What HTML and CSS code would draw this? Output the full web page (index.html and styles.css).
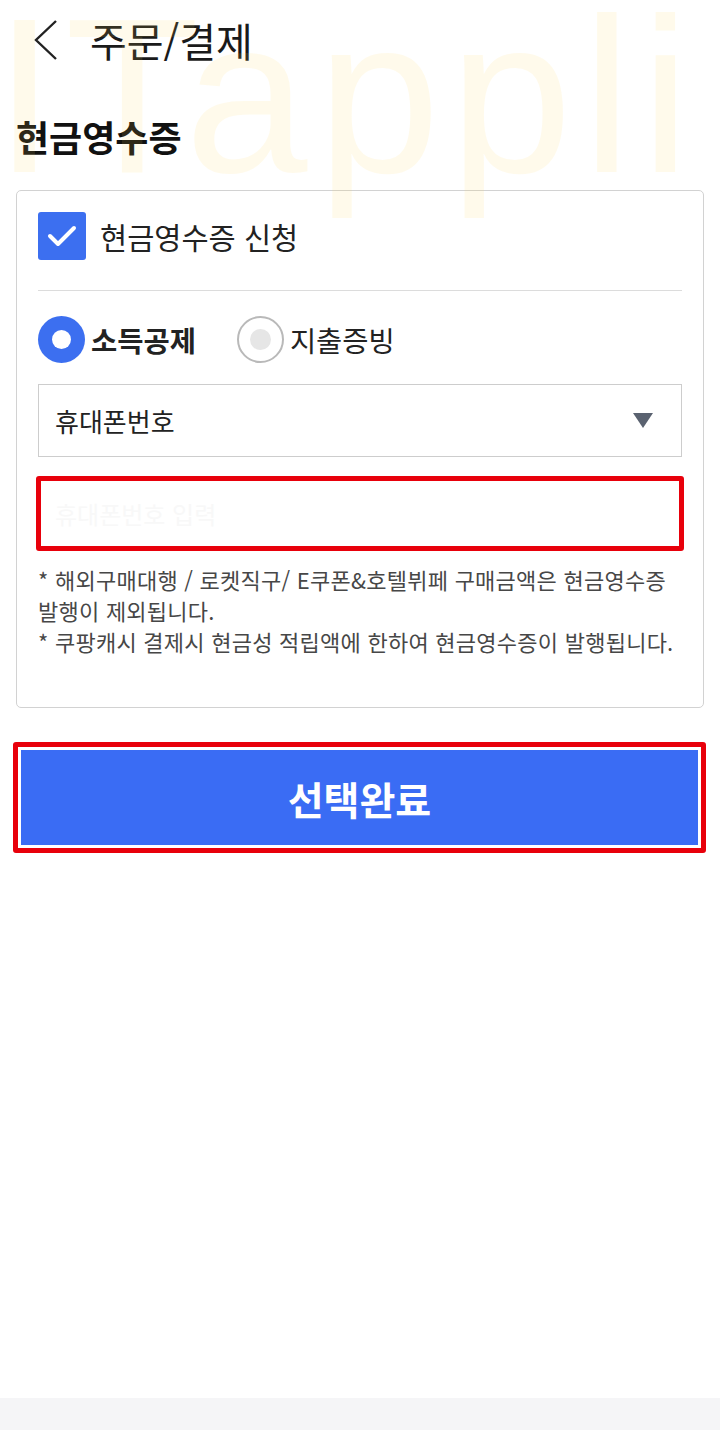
FILE: index.html
```html
<!DOCTYPE html>
<html lang="ko">
<head>
    <meta charset="UTF-8">
    <meta name="viewport" content="width=device-width, initial-scale=1.0">
    <title>주문/결제</title>
    <link rel="stylesheet" href="styles.css">
</head>
<body>
    <div class="screen">
        <div class="watermark">ITappli</div>

        <header class="topbar">
            <svg class="back" width="24" height="40" viewBox="0 0 24 40">
                <polyline points="22,1 2,20 22,39" fill="none" stroke="#222" stroke-width="2.4"/>
            </svg>
            <h1>주문/결제</h1>
        </header>

        <h2 class="section-title">현금영수증</h2>

        <div class="card">
            <label class="check-row">
                <span class="checkbox">
                    <svg width="48" height="48" viewBox="0 0 48 48">
                        <polyline points="12,24 20,32 36,16" fill="none" stroke="#fff" stroke-width="4" stroke-linecap="round" stroke-linejoin="round"/>
                    </svg>
                </span>
                <span>현금영수증 신청</span>
            </label>

            <hr class="divider">

            <div class="radio-row">
                <label class="radio selected"><span class="dot"></span>소득공제</label>
                <label class="radio"><span class="dot"></span>지출증빙</label>
            </div>

            <div class="select">
                <span>휴대폰번호</span>
                <span class="caret"></span>
            </div>

            <div class="input-wrap">
                <input type="text" placeholder="휴대폰번호 입력">
            </div>

            <p class="notes">
                * 해외구매대행 / 로켓직구/ E쿠폰&amp;호텔뷔페 구매금액은 현금영수증 발행이 제외됩니다.<br>
                * 쿠팡캐시 결제시 현금성 적립액에 한하여 현금영수증이 발행됩니다.
            </p>
        </div>

        <div class="btn-wrap">
            <button class="submit">선택완료</button>
        </div>

        <div class="bottom-bar"></div>
    </div>
</body>
</html>
```

FILE: styles.css
```css
body {
    margin: 0;
    background: #fff;
    font-family: "Noto Sans CJK KR", "Noto Sans", sans-serif;
    color: #222;
}

.screen {
    position: relative;
    min-height: 1430px;
    display: flex;
    flex-direction: column;
    overflow: hidden;
}

/* faint watermark over the page */
.watermark {
    position: absolute;
    top: 8px;
    left: -6px;
    font-family: "Liberation Sans", Arial, sans-serif;
    font-size: 220px;
    line-height: 0.8;
    letter-spacing: 10px;
    color: rgba(255, 214, 90, 0.12);
    pointer-events: none;
    z-index: 5;
    white-space: nowrap;
}

.topbar {
    height: 80px;
    display: flex;
    align-items: center;
    padding-left: 34px;
}

.topbar .back {
    margin-right: 32px;
}

.topbar h1 {
    margin: 0;
    font-size: 40px;
    font-weight: 400;
    color: #1a1a1a;
}

.section-title {
    margin: 36px 0 0 16px;
    font-size: 36px;
    line-height: 40px;
    font-weight: 700;
    color: #111;
}

.card {
    margin: 34px 16px 0;
    border: 1px solid #d2d2d2;
    border-radius: 5px;
    padding: 21px 21px 50px;
}

.check-row {
    display: flex;
    align-items: center;
    height: 48px;
    gap: 14px;
    font-size: 29.5px;
    color: #222;
}

.checkbox {
    width: 48px;
    height: 48px;
    background: #3c6ff0;
    border-radius: 3px;
    display: block;
}

.checkbox svg {
    display: block;
}

.divider {
    margin: 30px 0 0;
    border: 0;
    border-top: 1px solid #dcdcdc;
}

.radio-row {
    margin-top: 24px;
    height: 48px;
    display: flex;
    align-items: center;
    gap: 41px;
}

.radio {
    display: flex;
    align-items: center;
    gap: 6px;
    font-size: 28.5px;
    color: #222;
}

.radio .dot {
    width: 47px;
    height: 47px;
    box-sizing: border-box;
    border-radius: 50%;
    border: 2px solid #b9b9b9;
    display: flex;
    align-items: center;
    justify-content: center;
}

.radio .dot::after {
    content: "";
    width: 21px;
    height: 21px;
    border-radius: 50%;
    background: #e6e6e6;
}

.radio.selected {
    font-weight: 700;
}

.radio.selected .dot {
    border: 0;
    background: #3c6ff0;
}

.radio.selected .dot::after {
    width: 19px;
    height: 19px;
    background: #fff;
}

.select {
    margin-top: 21px;
    height: 73px;
    box-sizing: border-box;
    border: 1px solid #cdcdcd;
    display: flex;
    align-items: center;
    justify-content: space-between;
    padding: 0 28px 0 16px;
    font-size: 26px;
    color: #222;
}

.caret {
    width: 0;
    height: 0;
    border-left: 10px solid transparent;
    border-right: 10px solid transparent;
    border-top: 15px solid #5a6270;
}

.input-wrap {
    margin: 19px -2px 0;
    height: 75px;
    box-sizing: border-box;
    border: 5px solid #e8000b;
    border-radius: 3px;
    display: flex;
}

.input-wrap input {
    flex: 1;
    border: 0;
    outline: none;
    padding: 0 14px;
    font-family: inherit;
    font-size: 24px;
    background: transparent;
}

.input-wrap input::placeholder {
    color: #f8f8f8;
}

.notes {
    margin: 13px 0 0;
    font-size: 22px;
    letter-spacing: 0.25px;
    line-height: 31px;
    color: #474747;
}

.btn-wrap {
    margin: 34px 14px 0 13px;
    border: 5px solid #e8000b;
    border-radius: 3px;
    padding: 3px;
}

.submit {
    display: block;
    width: 100%;
    height: 95px;
    border: 0;
    background: #3a6cf4;
    color: #fff;
    font-family: inherit;
    font-size: 39px;
    font-weight: 700;
    cursor: pointer;
}

.bottom-bar {
    margin-top: auto;
    height: 32px;
    background: #f5f5f7;
}
```
